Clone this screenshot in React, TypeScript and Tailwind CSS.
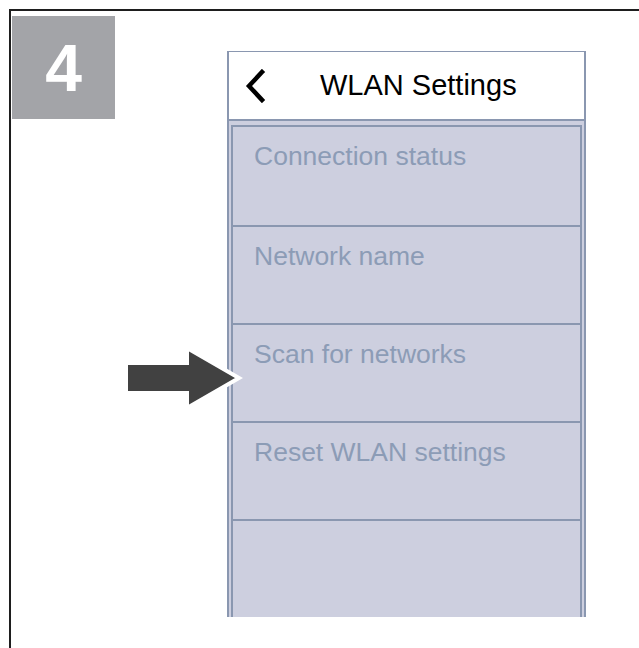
import React from "react";

const items = ["Connection status", "Network name", "Scan for networks", "Reset WLAN settings", ""];

export default function App() {
  return (
    <div className="relative w-[639px] h-[648px] bg-white overflow-hidden" style={{ fontFamily: '"Liberation Sans", Arial, sans-serif' }}>
      <div className="pt-[9px] pl-[9px] h-full">
        <div className="flex h-full border-l-2 border-t-2 border-[#1e1e1e]">
          <div className="ml-[1px] mt-[5px] w-[103px] h-[103px] bg-[#a3a4a8] flex items-center justify-center">
            <span className="text-white font-bold text-[66px] leading-none">4</span>
          </div>
          <div className="ml-[112px] mt-[40px] w-[359px] h-[566px] flex flex-col border-x-2 border-t border-[#8a97b0] overflow-hidden">
            <div className="h-[69px] shrink-0 bg-white flex items-center border-b-2 border-[#8a97b0]">
              <svg width="22" height="34" viewBox="0 0 22 34" className="ml-[16px]">
                <path d="M17 3 L4 17 L17 31" fill="none" stroke="#000" strokeWidth="4.5" strokeLinecap="square" strokeLinejoin="miter" />
              </svg>
              <span className="ml-[53px] text-[29px] text-black leading-none">WLAN Settings</span>
            </div>
            <div className="flex-1 bg-[#cdcfdf] px-[2px] pt-[4px]">
              <div className="border-x-2 border-t-2 border-[#8a97b0] h-full">
                {items.map((t, i) => (
                  <div key={i} className={`h-[98px] ${i > 0 ? "border-t-2 border-[#8a97b0]" : ""} pl-[21px] pt-[16px]`}>
                    <span className="text-[26.5px] text-[#8c9cb6] leading-none">{t}</span>
                  </div>
                ))}
              </div>
            </div>
          </div>
        </div>
      </div>
      <svg className="absolute left-[122px] top-[344px]" width="130" height="68" viewBox="0 0 130 68">
        <polygon points="4,19 65,19 65,4 117,34 65,64 65,49 4,49" fill="#414141" stroke="#ffffff" strokeWidth="4" strokeLinejoin="miter" />
      </svg>
    </div>
  );
}
